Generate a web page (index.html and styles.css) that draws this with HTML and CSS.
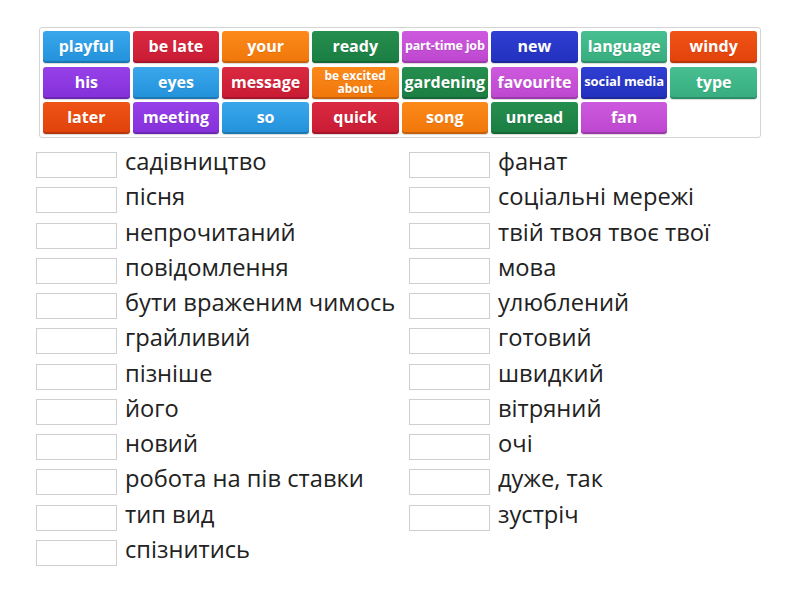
FILE: index.html
```html
<!DOCTYPE html>
<html>
<head>
<meta charset="utf-8">
<link rel="stylesheet" href="styles.css">
</head>
<body>
<div class="bank">
  <div class="tile blue">playful</div>
  <div class="tile red">be late</div>
  <div class="tile orange">your</div>
  <div class="tile green">ready</div>
  <div class="tile magenta small">part-time job</div>
  <div class="tile navy">new</div>
  <div class="tile teal">language</div>
  <div class="tile redorange">windy</div>

  <div class="tile purple">his</div>
  <div class="tile blue">eyes</div>
  <div class="tile red">message</div>
  <div class="tile orange tiny"><span>be excited</span><span>about</span></div>
  <div class="tile green">gardening</div>
  <div class="tile magenta">favourite</div>
  <div class="tile navy small wide">social media</div>
  <div class="tile teal">type</div>

  <div class="tile redorange">later</div>
  <div class="tile purple">meeting</div>
  <div class="tile blue">so</div>
  <div class="tile red">quick</div>
  <div class="tile orange">song</div>
  <div class="tile green">unread</div>
  <div class="tile magenta">fan</div>
</div>

<div class="answers">
  <div class="col">
    <div class="row"><span class="box"></span><span class="label">садівництво</span></div>
    <div class="row"><span class="box"></span><span class="label">пісня</span></div>
    <div class="row"><span class="box"></span><span class="label">непрочитаний</span></div>
    <div class="row"><span class="box"></span><span class="label">повідомлення</span></div>
    <div class="row"><span class="box"></span><span class="label">бути враженим чимось</span></div>
    <div class="row"><span class="box"></span><span class="label">грайливий</span></div>
    <div class="row"><span class="box"></span><span class="label">пізніше</span></div>
    <div class="row"><span class="box"></span><span class="label">його</span></div>
    <div class="row"><span class="box"></span><span class="label">новий</span></div>
    <div class="row"><span class="box"></span><span class="label">робота на пів ставки</span></div>
    <div class="row"><span class="box"></span><span class="label">тип вид</span></div>
    <div class="row"><span class="box"></span><span class="label">спізнитись</span></div>
  </div>
  <div class="col">
    <div class="row"><span class="box"></span><span class="label">фанат</span></div>
    <div class="row"><span class="box"></span><span class="label">соціальні мережі</span></div>
    <div class="row"><span class="box"></span><span class="label">твій твоя твоє твої</span></div>
    <div class="row"><span class="box"></span><span class="label">мова</span></div>
    <div class="row"><span class="box"></span><span class="label">улюблений</span></div>
    <div class="row"><span class="box"></span><span class="label">готовий</span></div>
    <div class="row"><span class="box"></span><span class="label">швидкий</span></div>
    <div class="row"><span class="box"></span><span class="label">вітряний</span></div>
    <div class="row"><span class="box"></span><span class="label">очі</span></div>
    <div class="row"><span class="box"></span><span class="label">дуже, так</span></div>
    <div class="row"><span class="box"></span><span class="label">зустріч</span></div>
  </div>
</div>
</body>
</html>
```
FILE: styles.css
```css
* { box-sizing: border-box; }
html, body { margin: 0; padding: 0; background: #fff; }
body { font-family: "Open Sans", "Noto Sans", sans-serif; }

.bank {
  margin: 27px 0 0 39px;
  width: 722px;
  border: 1px solid #d4d4d4;
  border-radius: 3px;
  padding: 3px;
  display: grid;
  grid-template-columns: repeat(8, 1fr);
  grid-auto-rows: 32px;
  gap: 3.5px 3px;
}

.tile {
  display: flex;
  flex-direction: column;
  align-items: center;
  justify-content: center;
  text-align: center;
  color: #fff;
  font-weight: 700;
  font-size: 16px;
  line-height: 1;
  padding-bottom: 2px;
  border-radius: 3px;
  white-space: nowrap;
  box-shadow: inset 0 -2px 0 rgba(0,0,0,0.18), 0 1px 1px rgba(0,0,0,0.15);
  text-shadow: 0 1px 0 rgba(0,0,0,0.1);
}
.tile.small { font-size: 12.5px; letter-spacing: -0.2px; }
.tile.wide { font-size: 13px; letter-spacing: -0.1px; }
.tile.tiny { font-size: 12px; line-height: 13px; padding-bottom: 2px; }

.blue { background: linear-gradient(#3aa7ec, #2291da); }
.red { background: linear-gradient(#da2a41, #c81b33); }
.orange { background: linear-gradient(#fb8a1a, #f1760a); }
.green { background: linear-gradient(#258f4f, #1b7d42); }
.magenta { background: linear-gradient(#cd5ade, #bd46cf); }
.navy { background: linear-gradient(#2f3fd2, #2230bd); }
.teal { background: linear-gradient(#48bf90, #37ad7f); }
.redorange { background: linear-gradient(#f05316, #e0420b); }
.purple { background: linear-gradient(#9640e8, #8430da); }

.answers {
  margin: 14px 0 0 36px;
  display: grid;
  grid-template-columns: 373px 373px;
}
.col {
  display: flex;
  flex-direction: column;
  gap: 9.27px;
}
.row {
  display: flex;
  align-items: center;
  height: 26px;
}
.box {
  width: 81px;
  height: 26px;
  border: 1px solid #cfcfcf;
  flex: none;
}
.label {
  margin-left: 8px;
  font-size: 23.7px;
  color: #222;
  white-space: nowrap;
  line-height: 26px;
  position: relative;
  top: -4px;
}
```
